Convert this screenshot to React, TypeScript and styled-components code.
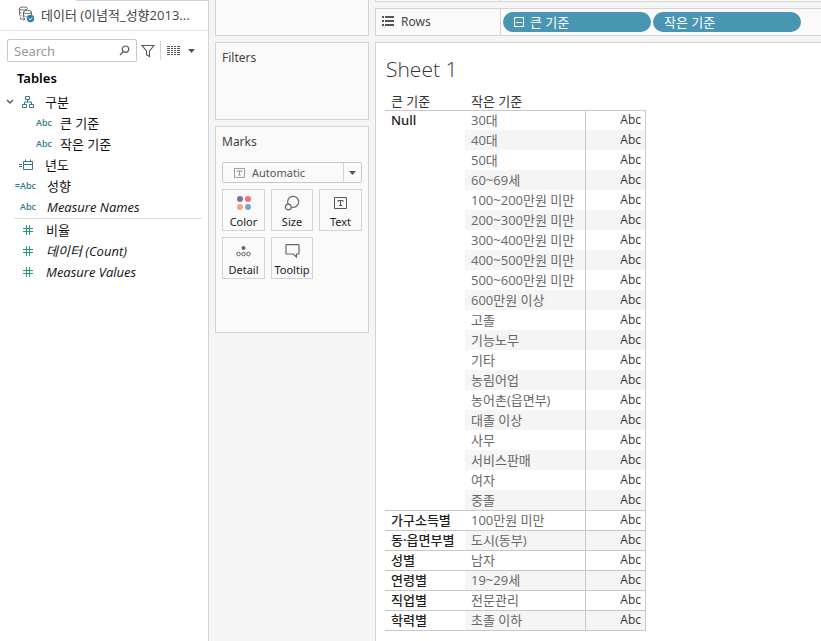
import React from "react";
import styled, { createGlobalStyle } from "styled-components";

const GlobalStyle = createGlobalStyle`
  * { box-sizing: border-box; }
  body {
    margin: 0;
    background: #f5f5f5;
    color: #333;
    font-family: "Noto Sans", "Noto Sans CJK KR", sans-serif;
    font-size: 12px;
  }
  button, input, select { font: inherit; color: inherit; }
  button { padding: 0; border: 0; background: none; cursor: pointer; }
  ul { list-style: none; margin: 0; padding: 0; }
  h1, h2 { margin: 0; font-weight: 400; }
`;

const Workbook = styled.div`
  display: grid;
  grid-template-columns: 209px 166px minmax(0, 1fr);
  min-height: 100vh;
`;

/* Data pane */

const DataPane = styled.aside`
  background: #fff;
  border-right: 1px solid #d4d4d4;
`;

const PaneTopEdge = styled.div`
  height: 1px;
  margin-left: 76px;
  background: #d4d4d4;
`;

const SourceButton = styled.button`
  display: flex;
  align-items: center;
  gap: 6px;
  width: 100%;
  height: 30px;
  padding: 0 18px 2px;
  border-bottom: 1px solid #e6e6e6;
  color: #444;
  font-family: "Open Sans", "Noto Sans CJK KR", sans-serif;
  font-size: 13px;
  text-align: left;
  white-space: nowrap;
`;

const SearchBar = styled.div`
  display: flex;
  align-items: center;
  height: 23px;
  margin: 8px 7px 0;
`;

const SearchField = styled.label`
  display: flex;
  align-items: center;
  width: 130px;
  height: 23px;
  padding: 0 6px;
  border: 1px solid #c8c8c8;
  border-radius: 2px;
`;

const SearchInput = styled.input`
  flex: 1;
  min-width: 0;
  padding: 0;
  border: 0;
  outline: 0;
  background: none;
  font-size: 13px;
  &::placeholder { color: #999; opacity: 1; }
`;

const ToolButton = styled.button<{ $divided?: boolean }>`
  display: flex;
  align-items: center;
  gap: 8px;
  height: 19px;
  padding: 0 ${(p) => (p.$divided ? 4 : 5)}px 0 ${(p) => (p.$divided ? 6 : 4)}px;
  border-left: ${(p) => (p.$divided ? "1px solid #d4d4d4" : "0")};
`;

const TablesHeading = styled.h2`
  margin: 7px 0 3px 17px;
  font-size: 13px;
  line-height: 19px;
  font-weight: 600;
  color: #000;
`;

const FieldList = styled.ul<{ $ruled?: boolean }>`
  margin-left: ${(p) => (p.$ruled ? 14 : 0)}px;
  margin-right: 6px;
  padding-bottom: 1px;
  border-top: ${(p) => (p.$ruled ? "1px solid #dcdcdc" : "0")};
`;

const FieldRow = styled.button<{ $indent: number; $italic?: boolean }>`
  display: flex;
  align-items: center;
  gap: 8px;
  width: 100%;
  height: 21px;
  padding-left: ${(p) => p.$indent}px;
  color: #111;
  font-family: "Open Sans", "Noto Sans CJK KR", sans-serif;
  font-size: 13px;
  font-style: ${(p) => (p.$italic ? "italic" : "normal")};
  text-align: left;
  white-space: nowrap;
`;

const FieldName = styled.span`
  padding-left: 3px;
`;

const FieldIcon = styled.span<{ $wide?: boolean }>`
  display: flex;
  justify-content: flex-end;
  align-items: center;
  width: ${(p) => (p.$wide ? 22 : 18)}px;
  color: #34788f;
  font-size: 9px;
  font-weight: 600;
  font-style: normal;
`;

const MeasureIcon = styled(FieldIcon)`
  width: 14px;
  justify-content: center;
  color: #2e9a74;
`;

/* Cards */

const CardColumn = styled.div`
  display: flex;
  flex-direction: column;
  gap: 6px;
  padding: 0 6px;
`;

const Card = styled.section<{ $height: number; $open?: boolean }>`
  height: ${(p) => p.$height}px;
  padding: 6px;
  background: #fafafa;
  border: 1px solid #d4d4d4;
  border-top-width: ${(p) => (p.$open ? 0 : 1)}px;
`;

const CardTitle = styled.h2`
  font-size: 12px;
  line-height: 18px;
  color: #444;
`;

const MarkType = styled.label`
  display: flex;
  align-items: center;
  position: relative;
  height: 21px;
  margin: 11px 0 6px;
  color: #555;
`;

const MarkSelect = styled.select`
  width: 100%;
  height: 21px;
  padding: 0 0 0 29px;
  border: 1px solid #c8c8c8;
  border-radius: 2px;
  background: #fafafa;
  appearance: none;
  font-size: 11px;
  outline: 0;
`;

const SelectGlyph = styled.span`
  position: absolute;
  left: 12px;
  display: flex;
  pointer-events: none;
  color: #888;
`;

const SelectArrow = styled.span`
  position: absolute;
  right: 1px;
  display: flex;
  align-items: center;
  justify-content: center;
  width: 18px;
  height: 19px;
  border-left: 1px solid #d4d4d4;
  pointer-events: none;
`;

const MarkGrid = styled.div`
  display: grid;
  grid-template-columns: 43px 42px 43px;
  gap: 6px;
`;

const MarkButton = styled.button`
  display: flex;
  flex-direction: column;
  align-items: center;
  justify-content: space-between;
  height: 42px;
  padding-top: 5px;
  border: 1px solid #d4d4d4;
  color: #222;
  font-size: 11px;
  line-height: 16px;
`;

const IconBox = styled.span`
  display: flex;
  align-items: center;
  height: 16px;
  color: #555;
`;

/* Shelves and view */

const View = styled.main`
  display: flex;
  flex-direction: column;
  gap: 6px;
`;

const Shelf = styled.div<{ $height: number; $open?: boolean }>`
  display: flex;
  height: ${(p) => p.$height}px;
  background: #fafafa;
  border: solid #d4d4d4;
  border-width: ${(p) => (p.$open ? 0 : 1)}px 0 1px 1px;
`;

const ShelfLabel = styled.div`
  display: flex;
  align-items: center;
  gap: 7px;
  flex: 0 0 125px;
  padding: 0 0 2px 6px;
  border-right: 1px solid #d4d4d4;
  color: #444;
`;

const Pills = styled.div`
  display: flex;
  align-items: center;
  gap: 2px;
  flex: 1;
  min-width: 0;
  padding-left: 2px;
`;

const Pill = styled.button`
  display: flex;
  align-items: center;
  gap: 6px;
  flex: 0 0 148px;
  height: 20px;
  padding: 0 11px;
  border-radius: 10px;
  background: #4996b2;
  color: #fff;
  font-size: 13px;
  line-height: 18px;
`;

const Sheet = styled.section`
  flex: 1;
  padding: 11px 9px 10px;
  background: #fff;
  border: solid #d4d4d4;
  border-width: 1px 0 0 1px;
`;

const SheetTitle = styled.h1`
  padding-left: 1px;
  font-family: "Open Sans", "Noto Sans", sans-serif;
  font-size: 21px;
  line-height: 30px;
  font-weight: 300;
  color: #333;
`;

const Crosstab = styled.table`
  margin-top: 8px;
  border-collapse: separate;
  border-spacing: 0;
  border-bottom: 1px solid #c8c8c8;
  table-layout: fixed;
  width: 261px;
`;

const HeaderCell = styled.th<{ $width: number }>`
  width: ${(p) => p.$width}px;
  height: 18px;
  padding: 0 6px;
  color: #333;
  font-size: 13px;
  font-weight: 400;
  line-height: 18px;
  text-align: left;
`;

const GroupCell = styled.th`
  height: 20px;
  padding: 0 0 0 6px;
  border-top: 1px solid #c8c8c8;
  color: #222;
  font-size: 13px;
  font-weight: 500;
  line-height: 18px;
  text-align: left;
  vertical-align: top;
  white-space: nowrap;
`;

const BodyCell = styled.td<{ $band: boolean; $first: boolean; $mark?: boolean }>`
  height: 20px;
  padding: 0 ${(p) => (p.$mark ? 4 : 6)}px;
  border-top: 1px solid ${(p) => (p.$first ? "#c8c8c8" : p.$band ? "#f5f5f5" : "#fff")};
  border-right: 1px solid #c8c8c8;
  background: ${(p) => (p.$band ? "#f5f5f5" : "#fff")};
  color: ${(p) => (p.$mark ? "#333" : "#666")};
  font-family: "Open Sans", "Noto Sans CJK KR", sans-serif;
  font-size: ${(p) => (p.$mark ? 12 : 13)}px;
  line-height: 18px;
  text-align: ${(p) => (p.$mark ? "right" : "left")};
  vertical-align: top;
  white-space: nowrap;
`;

const groups: { name: string; members: string[] }[] = [
  {
    name: "Null",
    members: [
      "30대", "40대", "50대", "60~69세", "100~200만원 미만", "200~300만원 미만",
      "300~400만원 미만", "400~500만원 미만", "500~600만원 미만", "600만원 이상",
      "고졸", "기능노무", "기타", "농림어업", "농어촌(읍면부)", "대졸 이상",
      "사무", "서비스판매", "여자", "중졸",
    ],
  },
  { name: "가구소득별", members: ["100만원 미만"] },
  { name: "동·읍면부별", members: ["도시(동부)"] },
  { name: "성별", members: ["남자"] },
  { name: "연령별", members: ["19~29세"] },
  { name: "직업별", members: ["전문관리"] },
  { name: "학력별", members: ["초졸 이하"] },
];

const tableRows = groups
  .flatMap((g) => g.members.map((member, i) => ({ group: g.name, span: g.members.length, first: i === 0, member })))
  .map((row, index) => ({ ...row, band: index % 2 === 1 }));

const DatabaseIcon = () => (
  <svg width="17" height="17" viewBox="0 0 17 17" fill="none" stroke="#666">
    <path d="M1.500 8.500v-6c0-2 8-2 8 0M1.500 2.500c0 2 8 2 8 0M1.500 5.500c0 1 1 1.400 2 1.500M1.500 8.500c0 1 1 1.400 2 1.500" />
    <path d="M5.500 11V6c0-2 8-2 8 0v3M5.500 6c0 2 8 2 8 0M5.500 9c0 1 1.500 1.500 3 1.500M2.500 11.500v1.500h4M5.500 11.500l1.500 1.500-1.500 1.500" />
    <circle cx="12.500" cy="12.500" r="3.700" fill="#2b80a4" stroke="none" />
    <path d="M10.700 12.500l1.400 1.400 2.300-2.600" stroke="#fff" />
  </svg>
);

const MagnifierIcon = () => (
  <svg width="11" height="11" viewBox="0 0 11 11" fill="none" stroke="#555" strokeWidth="1.200">
    <circle cx="6.500" cy="4.200" r="3.200" />
    <path d="M4.200 6.600L1 10" />
  </svg>
);

const FunnelIcon = () => (
  <svg width="14" height="14" viewBox="0 0 14 14" fill="none" stroke="#555" strokeWidth="1.100">
    <path d="M1 1.500h12L8.500 7v5.500L5.500 10.800V7z" />
  </svg>
);

const GridIcon = () => (
  <svg width="13" height="11" viewBox="0 0 13 11" fill="none" stroke="#555">
    <path d="M0 1.500h13M0 3.500h13M0 5.500h13M0 7.500h13M0 9.500h13" strokeDasharray="3 1 2 1 2 1 3 0" />
  </svg>
);

const ArrowIcon = () => (
  <svg width="7" height="4" viewBox="0 0 7 4" fill="#555">
    <path d="M0 0h7L3.500 4z" />
  </svg>
);

const ChevronIcon = () => (
  <svg width="8" height="6" viewBox="0 0 8 6" fill="none" stroke="#555" strokeWidth="1.400">
    <path d="M1 1l3 3 3-3" />
  </svg>
);

const HierarchyIcon = () => (
  <svg width="12" height="12" viewBox="0 0 12 12" fill="none" stroke="#34788f">
    <path d="M3.500 .5h4v3h-4zM.5 8.500h4v3h-4zM7.500 8.500h4v3h-4zM5.500 3.500V6M2.500 8.500V6h7v2.500" />
  </svg>
);

const CalendarIcon = () => (
  <svg width="15" height="12" viewBox="0 0 15 12" fill="none" stroke="#34788f">
    <path d="M0 5.500h3M0 7.500h3M4.500 2.500h9v8h-9zM4.500 5.500h9M6.500 .5v2M11.500 .5v2" />
  </svg>
);

const NumberIcon = () => (
  <svg width="10" height="10" viewBox="0 0 10 10" fill="none" stroke="#2e9a74">
    <path d="M3.500 0v10M6.500 0v10M0 3.500h10M0 6.500h10" />
  </svg>
);

const TextMarkIcon = ({ size }: { size: "small" | "large" }) => (
  <svg width={size === "small" ? 11 : 13} height={size === "small" ? 10 : 12} viewBox="0 0 13 12" fill="none" stroke="currentColor">
    <path d="M.5 .5h12v11H.5zM4 5V3.500h5V5M6.500 3.500v5M5 8.500h3" />
  </svg>
);

const ColorIcon = () => (
  <svg width="14" height="14" viewBox="0 0 14 14">
    <circle cx="3" cy="3" r="3" fill="#86719a" />
    <circle cx="11" cy="3" r="3" fill="#fb6b7c" />
    <circle cx="3" cy="11" r="3" fill="#f5a673" />
    <circle cx="11" cy="11" r="3" fill="#7ca3cf" />
  </svg>
);

const SizeIcon = () => (
  <svg width="16" height="16" viewBox="0 0 16 16" fill="none" stroke="#666" strokeWidth="1.200">
    <path d="M4.200 9.200A5.500 5.500 0 1 1 7.300 12" />
    <circle cx="4.300" cy="12" r="2.900" />
  </svg>
);

const DetailIcon = () => (
  <svg width="15" height="12" viewBox="0 0 15 12" fill="none" stroke="#666">
    <circle cx="7.500" cy="3" r="2" fill="#666" stroke="none" />
    <circle cx="2.500" cy="9" r="1.800" />
    <circle cx="7.500" cy="9" r="1.800" />
    <circle cx="12.500" cy="9" r="1.800" />
  </svg>
);

const TooltipIcon = () => (
  <svg width="15" height="14" viewBox="0 0 15 14" fill="none" stroke="#666" strokeWidth="1.200">
    <path d="M1.500 .7h12q.5 0 .5.500v8.300q0 .5-.5.500h-2v3L8 10H1.500Q1 10 1 9.500V1.200q0-.5.5-.5z" />
  </svg>
);

const RowsIcon = () => (
  <svg width="12" height="10" viewBox="0 0 12 10" fill="#555">
    <path d="M0 0h2v2H0zM0 4h2v2H0zM0 8h2v2H0zM3 0h9v2H3zM3 4h9v2H3zM3 8h9v2H3z" />
  </svg>
);

const CollapseIcon = () => (
  <svg width="10" height="10" viewBox="0 0 10 10" fill="none" stroke="#fff">
    <path d="M.5 .5h9v9h-9zM2 5.500h6" />
  </svg>
);

export default function App() {
  return (
    <>
      <GlobalStyle />
      <Workbook>
        <DataPane>
          <PaneTopEdge />
          <SourceButton><DatabaseIcon />데이터 (이념적_성향2013...</SourceButton>
          <SearchBar>
            <SearchField>
              <SearchInput type="text" placeholder="Search" aria-label="Search" />
              <MagnifierIcon />
            </SearchField>
            <ToolButton aria-label="Filter fields"><FunnelIcon /></ToolButton>
            <ToolButton $divided aria-label="View options"><GridIcon /><ArrowIcon /></ToolButton>
          </SearchBar>
          <TablesHeading>Tables</TablesHeading>
          <FieldList>
            <li><FieldRow $indent={6}><ChevronIcon /><HierarchyIcon /><FieldName>구분</FieldName></FieldRow></li>
            <li><FieldRow $indent={34}><FieldIcon>Abc</FieldIcon>큰 기준</FieldRow></li>
            <li><FieldRow $indent={34}><FieldIcon>Abc</FieldIcon>작은 기준</FieldRow></li>
            <li><FieldRow $indent={16}><FieldIcon><CalendarIcon /></FieldIcon><FieldName>년도</FieldName></FieldRow></li>
            <li><FieldRow $indent={14}><FieldIcon $wide>=Abc</FieldIcon><FieldName>성향</FieldName></FieldRow></li>
            <li><FieldRow $indent={18} $italic><FieldIcon>Abc</FieldIcon><FieldName>Measure Names</FieldName></FieldRow></li>
          </FieldList>
          <FieldList $ruled>
            <li><FieldRow $indent={7}><MeasureIcon><NumberIcon /></MeasureIcon><FieldName>비율</FieldName></FieldRow></li>
            <li><FieldRow $indent={7} $italic><MeasureIcon><NumberIcon /></MeasureIcon><FieldName>데이터 (Count)</FieldName></FieldRow></li>
            <li><FieldRow $indent={7} $italic><MeasureIcon><NumberIcon /></MeasureIcon><FieldName>Measure Values</FieldName></FieldRow></li>
          </FieldList>
        </DataPane>

        <CardColumn>
          <Card $height={36} $open />
          <Card $height={78}><CardTitle>Filters</CardTitle></Card>
          <Card $height={207}>
            <CardTitle>Marks</CardTitle>
            <MarkType>
              <MarkSelect aria-label="Mark type"><option>Automatic</option></MarkSelect>
              <SelectGlyph><TextMarkIcon size="small" /></SelectGlyph>
              <SelectArrow><ArrowIcon /></SelectArrow>
            </MarkType>
            <MarkGrid>
              <MarkButton><IconBox><ColorIcon /></IconBox>Color</MarkButton>
              <MarkButton><IconBox><SizeIcon /></IconBox>Size</MarkButton>
              <MarkButton><IconBox><TextMarkIcon size="large" /></IconBox>Text</MarkButton>
              <MarkButton><IconBox><DetailIcon /></IconBox>Detail</MarkButton>
              <MarkButton><IconBox><TooltipIcon /></IconBox>Tooltip</MarkButton>
            </MarkGrid>
          </Card>
        </CardColumn>

        <View>
          <Shelf $height={2} $open><ShelfLabel /></Shelf>
          <Shelf $height={28}>
            <ShelfLabel><RowsIcon />Rows</ShelfLabel>
            <Pills>
              <Pill><CollapseIcon />큰 기준</Pill>
              <Pill>작은 기준</Pill>
            </Pills>
          </Shelf>
          <Sheet>
            <SheetTitle>Sheet 1</SheetTitle>
            <Crosstab>
              <thead>
                <tr>
                  <HeaderCell $width={80} scope="col">큰 기준</HeaderCell>
                  <HeaderCell $width={121} scope="col">작은 기준</HeaderCell>
                  <HeaderCell $width={60} as="td" />
                </tr>
              </thead>
              <tbody>
                {tableRows.map((row) => (
                  <tr key={row.group + row.member}>
                    {row.first && <GroupCell scope="rowgroup" rowSpan={row.span}>{row.group}</GroupCell>}
                    <BodyCell $band={row.band} $first={row.first}>{row.member}</BodyCell>
                    <BodyCell $band={row.band} $first={row.first} $mark>Abc</BodyCell>
                  </tr>
                ))}
              </tbody>
            </Crosstab>
          </Sheet>
        </View>
      </Workbook>
    </>
  );
}
